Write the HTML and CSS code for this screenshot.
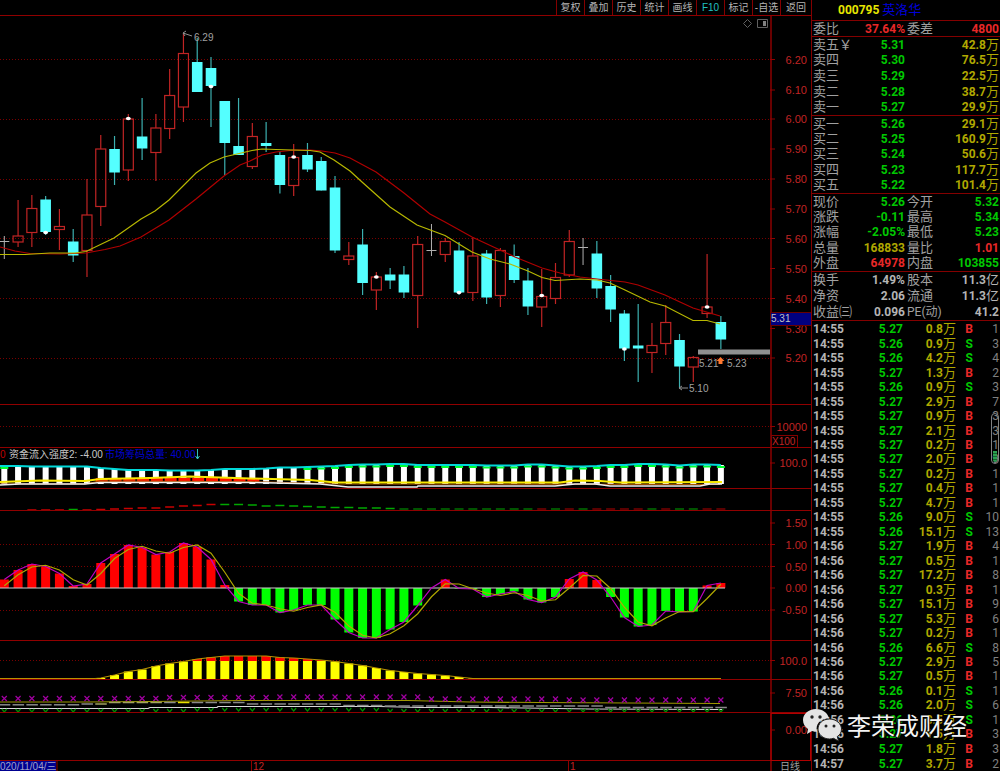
FILE: index.html
```html
<!DOCTYPE html>
<html lang="zh-CN">
<head>
<meta charset="utf-8">
<title>000795 英洛华</title>
<link rel="stylesheet" href="styles.css">
</head>
<body>
<div class="terminal">
  <main class="charts">
    <nav class="toolbar" aria-label="工具栏">
      <button type="button">复权</button>
      <button type="button">叠加</button>
      <button type="button">历史</button>
      <button type="button">统计</button>
      <button type="button">画线</button>
      <button type="button" class="f10">F10</button>
      <button type="button">标记</button>
      <button type="button">-自选</button>
      <button type="button">返回</button>
    </nav>
    <div class="panes" id="panes"></div>
  </main>
  <aside class="side">
    <h1 class="stock"><span class="code">000795</span> <span class="name">英洛华</span></h1>
    <table class="quote">
      <tbody><tr><th>委比</th><td class="up">37.64%</td><th>委差</th><td class="up">4800</td></tr></tbody>
    </table>
    <table class="quote book" id="sell"></table>
    <table class="quote book" id="buy"></table>
    <table class="quote five">
      <tbody>
      <tr><th>现价</th><td class="down">5.26</td><th>今开</th><td class="down">5.32</td></tr>
      <tr><th>涨跌</th><td class="down">-0.11</td><th>最高</th><td class="down">5.34</td></tr>
      <tr><th>涨幅</th><td class="down">-2.05%</td><th>最低</th><td class="down">5.23</td></tr>
      <tr><th>总量</th><td class="vol">168833</td><th>量比</th><td class="up">1.01</td></tr>
      <tr><th>外盘</th><td class="up">64978</td><th>内盘</th><td class="down">103855</td></tr>
      </tbody>
    </table>
    <table class="quote three">
      <tbody>
      <tr><th>换手</th><td>1.49%</td><th>股本</th><td>11.3<i>亿</i></td></tr>
      <tr><th>净资</th><td>2.06</td><th>流通</th><td>11.3<i>亿</i></td></tr>
      <tr><th>收益㈢</th><td>0.096</td><th class="pe">PE(动)</th><td>41.2</td></tr>
      </tbody>
    </table>
    <div class="tick-wrap">
      <table class="ticks" id="ticks"></table>
      <div class="gauge"><span></span></div>
    </div>
  </aside>
  <div class="watermark">
    <svg width="40" height="34" viewBox="0 0 40 34" aria-hidden="true">
      <path fill="#e4e4e4" d="M14 1C6.500 1 1 6 1 12c0 4 2 7 5 9l-1 5 5-3c2 .6 3.500.8 5 .7C13 16 19 10 27 10.500 26 5 20.500 1 14 1z"/>
      <path fill="#e4e4e4" stroke="#222" stroke-width="1" d="M27.500 11C20.500 11 16 15.800 16 21s5 10 11.500 10c1.500 0 2.800-.3 4-.7l5 2.700-1.200-4.500C38 27 39.500 24.300 39.500 21c0-5.300-5.500-10-12-10z"/>
      <g fill="#222"><circle cx="10" cy="9" r="1.700"/><circle cx="18" cy="9" r="1.700"/><circle cx="24" cy="18" r="1.500"/><circle cx="32" cy="18" r="1.500"/></g>
    </svg>
    <span>李荣成财经</span>
  </div>
</div>
<script src="app.js"></script>
</body>
</html>
```
FILE: styles.css
```css
* { box-sizing: border-box; }
body {
  margin: 0;
  background: #000;
  color: #b4b4b4;
  font-family: Roboto, "Liberation Sans", "Noto Sans CJK SC", sans-serif;
  font-size: 12px;
}
.terminal {
  position: relative;
  display: grid;
  grid-template-columns: minmax(0, 1fr) 189px;
  align-items: stretch;
}
.charts { display: flex; flex-direction: column; }

.toolbar {
  display: flex;
  justify-content: flex-end;
  height: 16px;
  border-bottom: 1px solid #900000;
}
.toolbar button {
  width: 28px;
  padding: 0;
  border: 0;
  border-left: 1px solid #840000;
  background: none;
  color: #b4b4b4;
  font: 10px/14px "Liberation Sans", "Noto Sans CJK SC", sans-serif;
  white-space: nowrap;
}
.toolbar button:last-child { width: 31px; }
.toolbar .f10 { color: #20c0c0; }

.panes { display: flex; flex-direction: column; }
.pane {
  display: block;
  width: 100%;
  height: auto;
  overflow: hidden;
  font-family: "Liberation Sans", "Noto Sans CJK SC", sans-serif;
  font-size: 11px;
}
.pane polyline { fill: none; }
.border { stroke: #900000; }
.grid { stroke: #780000; stroke-dasharray: 1 2; }
.axis { stroke: #680000; stroke-width: 2; }
.axis-label { fill: #c02424; text-anchor: end; }
.note { fill: #a0a0a0; font-size: 10px; }
.legend { font-size: 10px; }
.time { fill: #c02424; font-size: 10px; }

.side {
  display: flex;
  flex-direction: column;
  min-width: 0;
  border-left: 1px solid #840000;
}
.stock {
  height: 21px;
  margin: 0;
  padding-left: 26px;
  border-bottom: 1px solid #840000;
  font-size: 12px;
  line-height: 20px;
  white-space: nowrap;
}
.code { color: #e6e600; }
.name { color: #0000d8; font-size: 13px; font-weight: 400; }

table { width: 100%; border-collapse: collapse; table-layout: fixed; }
th, td { padding: 0; line-height: 14px; white-space: nowrap; }
th { text-align: left; font-size: 13px; font-weight: 400; color: #a0a0a0; }
td { text-align: right; font-weight: 700; }
td i { font-size: 13px; font-style: normal; font-weight: 400; }
.quote { border-bottom: 1px solid #840000; height: 16px; }
.quote th:first-child { width: 40px; padding-left: 1px; }
.quote td:nth-child(2) { width: 53px; }
.quote th:nth-child(3) { width: 42px; padding-left: 2px; }
.quote td:last-child { padding-right: 1px; }
.quote .pe { font-size: 12px; }
.book, .five { height: 78px; }
#sell { height: 79px; }
.three { height: 49px; }
.up { color: #e82828; }
.down { color: #00c800; }
.vol { color: #b0a800; }

.tick-wrap { position: relative; padding-top: 1px; }
.ticks { height: 449px; }
.ticks td:nth-child(1) { width: 40px; padding-left: 1px; text-align: left; }
.ticks td:nth-child(2) { width: 51px; }
.ticks td:nth-child(3) { width: 53px; }
.ticks td:nth-child(4) { width: 17px; }
.ticks td:nth-child(5) { padding-right: 1px; color: #808080; font-weight: 400; }
.gauge {
  position: absolute;
  right: 1px;
  top: 92px;
  display: flex;
  align-items: flex-end;
  width: 8px;
  height: 51px;
  padding: 1px;
  border: 1px solid #808080;
  border-radius: 4px;
}
.gauge span {
  width: 100%;
  height: 11px;
  border-radius: 0 0 2px 2px;
  background: repeating-linear-gradient(#2ca050 0 2px, #186030 2px 3px);
}

.watermark {
  position: absolute;
  right: 33px;
  bottom: 28px;
  display: flex;
  align-items: center;
  gap: 5px;
  color: #f4f4f4;
  font: 24px/36px "Noto Sans CJK SC", sans-serif;
  text-shadow: 1px 1px 1px #000, -1px -1px 1px #000;
}
```
FILE: app.js
```js
const STEP = 13.78;
const X = i => 4.3 + STEP * i;
const line = (x1, y1, x2, y2, attrs) => `<line x1="${x1}" y1="${y1}" x2="${x2}" y2="${y2}" ${attrs}/>`;
const rect = (x, y, w, h, attrs) => `<rect x="${x}" y="${y}" width="${w}" height="${h}" ${attrs}/>`;
const text = (x, y, s, attrs) => `<text x="${x}" y="${y}" ${attrs}>${s}</text>`;
const poly = (pts, color, w = 1.2) => `<polyline points="${pts}" stroke="${color}" stroke-width="${w}"/>`;
const grid = y => line(0, Math.floor(y) + 0.5, 770, Math.floor(y) + 0.5, 'class="grid"');
const label = (y, s) => line(770, y, 775, y, 'class="border"') + text(807, y + 4, s, 'class="axis-label"');
const box = document.getElementById('panes');

/* Panes share one coordinate space; each shows the band from top to bottom. */
function pane(top, bottom, name, body) {
  box.insertAdjacentHTML('beforeend',
    `<svg class="pane" viewBox="0 ${top} 811 ${bottom - top}" role="img" aria-label="${name}">` +
    line(771, top, 771, bottom, 'class="axis"') + body + '</svg>');
}
const bottomLine = y => line(0, y - 0.5, 811, y - 0.5, 'class="border"');

/* Candles: kind, high, body top, body bottom, low, marker */
const candles = [
['w',236,241.5,241.5,259],['r',200,236,242,247],['r',195,208.5,232.5,247],['c',196,199.5,232,235,232.5],
['r',209,226.5,229.5,250],['c',229,241.5,255.5,262],['r',179,215,250.5,277],['r',135,149,206.5,226],
['c',136,149,172.5,185],['r',114,119,170,181,118.5],['c',98,136.5,148.5,160],['r',114,128,152.5,181],
['r',69,95.5,128.5,139],['r',34,53.5,107,122],['c',38,62,92,92],['c',57,68,86,127,86.5],
['c',101,101,143,175],['c',98,146,155,155],['r',123,136.5,166.5,169],['c',122,143,146,152],
['c',152,155,185,193.5],['r',144,157.5,185.5,196,157],['c',143,155,169.5,172],['c',157,161,190.5,190.5],
['c',176,187.5,250.5,253],['r',242,256,259.5,265],['c',229,244.5,283,295],['r',272,277,290,310,277],
['c',268,274.5,280.5,289],['c',266,274.5,292.5,298],['r',236,244.5,295.5,328],['w',224,250.5,250.5,256],
['r',238,241.5,254.5,262],['c',242,250.5,292.5,295,292.5],['r',237,256,292.5,301],['c',250,253.5,297.5,304],
['r',248,250.5,295.5,307],['c',244.5,256,280,283],['c',268,280.5,306.5,315],['r',269,296.5,307,327,295.5],
['r',263,277.5,298.5,304],['r',230,241.5,275,277],['w',238,247.5,247.5,265],['c',241,253.5,288.5,298],
['c',275,286,309.5,322],['c',310,313.5,348.5,361,349],['c',304,345.5,348.5,382],['r',323,345.5,352.5,373],
['r',305,322.5,343.5,355],['c',334,340,366.5,388],['r',356,357.5,367,382],['r',254,307,313.5,318,307],
['c',316,322,339.5,349]];

let s = [59.5,119,179,238.5,298.5,358].map(grid).join('');
[[59.5,'6.20'],[90,'6.10'],[119,'6.00'],[149,'5.90'],[179,'5.80'],[209,'5.70'],[238.5,'5.60'],[268.5,'5.50'],[298.5,'5.40'],[328.5,'5.30'],[358,'5.20']]
  .forEach(([y, t]) => { s += label(y, t); });
s += rect(698, 349.5, 72, 5, 'fill="#909090"');
candles.forEach(([k, h, t, b, l], i) => {
  const x = X(i);
  if (k === 'c') s += line(x, h, x, l, 'stroke="#3cb0b0" stroke-width="1.200"') + rect(x - 5.3, t, 10.6, b - t, 'fill="#54ffff"');
  else if (k === 'r') s += line(x, h, x, t, 'stroke="#c02424" stroke-width="1.200"') + line(x, b, x, l, 'stroke="#c02424" stroke-width="1.200"') + rect(x - 5, t, 10, b - t, 'fill="none" stroke="#c02424" stroke-width="1.200"');
  else s += line(x, h, x, l, 'stroke="#b0b0b0"') + line(x - 5, t, x + 5, t, 'stroke="#b0b0b0"');
});
s += poly('0,247 15,251 30,253.5 60,254 86,253 105,249.5 120,246 141,237 169,220 196,199 224,176 240,165 250,161 262,155 276,152 295,150 310,150 322,151 335,153 350,158 376,172 404,193 430,214 445,222 472,237 500,250 515,257 542,268 560,273 580,277 597,279 625,282 638,285 665,295 680,302 693,308 720,316', '#b00000');
s += poly('0,254.5 25,254.5 50,253 75,253 86,251.5 114,238 141,219 155,211 169,200 196,173 210,163 224,157 252,150.5 262,149 276,149.5 310,150.5 320,152 334,160 350,171 362,182 390,207 417,225 445,235.5 472,252 490,259 510,264 528,271 542,277.5 555,280.5 580,279 597,280 610,283 625,290 650,302 665,306 693,320.5 707,320.5 720,324', '#b8b800');
candles.forEach((c, i) => { if (c[5]) s += `<ellipse cx="${X(i)}" cy="${c[5]}" rx="2.4" ry="1.8" fill="#fff"/>`; });
s += '<path d="M192 36l-9-3m3-2l-3 2 2 3" fill="none" stroke="#909090"/>' + text(194, 41, '6.29', 'class="note"');
s += '<path d="M688 388h-9m3-2l-3 2 3 2" fill="none" stroke="#909090"/>' + text(689, 392, '5.10', 'class="note"');
s += text(699, 367, '5.21', 'class="note"') + text(727, 367, '5.23', 'class="note"');
s += '<path d="M720.500 357l4 4h-2v3h-4v-3h-2z" fill="#ff7830"/>';
s += '<path d="M747.500 19.500l4 4-4 4-4-4z" fill="none" stroke="#606060"/><path d="M757.500 19.500h10v8h-10z" fill="none" stroke="#606060"/><path d="M763 21h3v5h-3z" fill="#808080"/>';
s += rect(770.5, 312.5, 41, 13, 'fill="#000080" stroke="#680000"') + text(771, 322, '5.31', 'fill="#c0c0c0" font-size="10"');
pane(16, 405, 'K线', s + bottomLine(405));

pane(405, 448, '成交量', grid(426.5) + label(426.5, '10000') + rect(771.5, 435.5, 26, 12, 'fill="none" stroke="#840000"') + text(772, 445, 'X100', 'fill="#c02424" font-size="10"') + bottomLine(448));

s = '';
const red = i => i >= 7 && i <= 18;
const top3 = [466,466,466.5,466.5,466.5,466.5,466.5,468,469,470,470,470,470.5,470.5,470.5,470,469,469,469,468.5,467.5,467.5,467,466.5,466,465,464.5,464.5,464,464,465,465,465,465,465,465.5,465.5,465.5,464.5,464.5,465.5,466.5,466.5,466,465,465,464,464,464.5,465.5,464.5,464.5,465];
top3.forEach((t, i) => {
  s += rect(X(i) - 3, t, 6, 484 - t, 'fill="#fff"');
  if (i >= 22 || i === 0) s += rect(X(i) - 4, t + 1, 8, 2, 'fill="#00ff30"');
  if (red(i)) s += rect(X(i) - 5, 478, 12, 4, 'fill="#ff1800"');
});
s += poly(top3.map((t, i) => X(i) + ',' + t).join(' '), '#00d8d8', 2) + line(0, 466, 5, 466, 'stroke="#00d8d8" stroke-width="2"');
s += poly('0,484 85,484 100,481 270,482 335,484 720,484.500', '#a85000');
s += poly('0,485 20,484 85,484 100,482.500 250,482.500 320,484 348,487 417,487 418,486 555,486 575,484 595,484 610,486 700,486 710,484 722,484', '#f0f0f0', 1.5);
s += poly('0,482 40,480.500 85,481 100,479 150,478 190,476.500 250,478.500 310,480 335,482.500 560,482.500 575,480.500 600,481 620,482.500 722,482', '#f8e800', 2);
s += text(0, 458, '0', 'class="legend" fill="#c00000"') + text(9, 458, '资金流入强度2: -4.00', 'class="legend" fill="#c8c8c8"') + text(105, 458, '市场筹码总量: 40.00', 'class="legend" fill="#0000d0"');
s += '<path d="M197.500 449v10m-2-3l2 3 2-3" fill="none" stroke="#30c0c0"/>' + label(463, '100.0');
pane(448, 489, '资金流入强度', s + bottomLine(489));

s = '';
const drift = [510,510,510,509.5,510,509.5,509,508.5,508,508,507,506,505.5,504.5,504.5,504.5,505,506,505.5,506,506.5,507,507.5,507.5,508,508,508.5];
const dim = new Set([39,41,43,44,45,46,48,51,52]);
for (let i = 2; i <= 52; i++) {
  const y = drift[i - 2] || 509;
  const r = (i < 16 && i !== 5) || dim.has(i);
  const color = r ? (i > 38 ? '#780000' : '#c80000') : (i > 28 ? '#007000' : '#00a800');
  s += line(X(i) - 4.5, y, X(i) + 4.5, y, `stroke="${color}" stroke-width="1.500"`);
}
pane(489, 511, '趋势', s + bottomLine(511));

s = [544.5,566.5,610].map(grid).join('');
[[523,'1.50'],[544.5,'1.00'],[566.5,'0.50'],[588,'0.00'],[610,'-0.50']].forEach(([y, t]) => { s += label(y, t); });
const macd = [579.5,570,564,566.5,573.5,586,584,563,554,545,547.5,554.5,552,543,547,559.5,585,601.5,605,605,612.5,610,605,605,619.5,632.5,638,638,629.5,622,605.5,588,579.5,588.5,589,597,594,591.5,599.5,602.5,597,579,572,580,597,617.5,626.5,625,611,612,611.5,585.5,583];
macd.forEach((y, i) => {
  s += y < 588 ? rect(X(i) - 4.5, y, 9, 588 - y, 'fill="#f00"') : rect(X(i) - 4.5, 588, 9, y - 588, 'fill="#0f0"');
});
s += line(0, 588, 725, 588, 'stroke="#d0d0d0"');
s += poly(macd.map((y, i) => X(i) + ',' + y).join(' '), '#c000c0');
s += poly(macd.map((y, i) => X(i) + ',' + (y + (i ? macd[i - 1] : 592)) / 2).join(' '), '#b0a800');
pane(511, 641, 'MACD', s + bottomLine(641));

s = grid(660.5) + label(660.5, '100.0');
const hill = [678,675,671.5,669.5,666,663.5,661.5,659,657.5,656,656,656,656,657.5,658,659,660,661.5,663.5,665.5,668,670.5,672,673.5,674.5,675.5,677,678.5];
s += bottomLine(680);
hill.forEach((y, n) => {
  const x = X(n + 7) - 4.5;
  s += rect(x, y, 9, 679 - y, 'fill="#ff0"');
  if (y < 661) s += rect(x, y, 9, 661 - y, 'fill="#f00"');
});
s += poly('0,678.500 95,678.500 ' + hill.map((y, n) => X(n + 7) + ',' + y).join(' ') + ' 721,678.500', '#b89400');
pane(641, 680, '能量', s);

s = label(693, '7.50');
s += poly('0,702 86,702 150,701.500 245,700.500 408,700.500 470,702 540,702.500 630,703 720,703.500', '#a09800');
s += poly('0,708.500 148,708.500 150,707.500 217,707.500 218,706.500 380,706.500 420,707.500 490,707.500 590,709 722,709.500', '#d8d8d8');
for (let i = 0; i <= 52; i++) {
  const x = X(i);
  const yx = i < 12 ? 698.5 : i < 20 ? 697.5 : i < 31 ? 697 : i < 41 ? 699 : 700;
  const yd = i < 6 ? 704.8 : i < 8 ? 704 : i < 18 ? 702.5 : i < 25 ? 704 : i < 28 ? 705.5 : i < 44 ? 706 : 707.5;
  const yv = i < 14 ? 711 : i < 28 ? 710 : 711;
  s += `<path d="M${x - 2.5} ${yx - 2.5}l5 5m0-5l-5 5" stroke="#a000a0" stroke-width="1.200"/>`;
  s += line(x - 5.5, yd, x + 6, yd, `stroke="${i === 13 ? '#e8e000' : i > 6 && i < 12 ? '#a0a060' : '#888'}" stroke-width="1.500"`);
  s += `<path d="M${x - 2.5} ${yv - 2}l2.500 3 2.500-3" fill="none" stroke="#009000" stroke-width="1.200"/>`;
}
pane(680, 713, '通道', s + bottomLine(713));

pane(713, 761, '空白', line(0, 760.5, 811, 760.5, 'class="border"') + rect(771, 713.5, 39.5, 47, 'fill="none" stroke="#b00000"') + label(730, '0.00'));

s = rect(0, 761, 56, 10, 'fill="#000090"') + text(0, 770, '020/11/04/三', 'fill="#a0a0c8" font-size="10"');
s += line(57, 761, 57, 771, 'class="border"') + line(251.5, 761, 251.5, 771, 'class="border"') + line(568.5, 761, 568.5, 771, 'class="border"');
s += text(253, 770, '12', 'class="time"') + text(570, 770, '1', 'class="time"') + text(780, 770, '日线', 'fill="#a0a0a0" font-size="10"');
pane(761, 771, '时间轴', s);

/* Order book and tick list */
const book = (id, rows) => {
  document.getElementById(id).innerHTML = '<tbody>' + rows.map(([n, p, v]) =>
    `<tr><th>${n}</th><td class="down">${p}</td><th></th><td class="vol">${v}<i>万</i></td></tr>`).join('') + '</tbody>';
};
book('sell', [['卖五￥','5.31','42.8'],['卖四','5.30','76.5'],['卖三','5.29','22.5'],['卖二','5.28','38.7'],['卖一','5.27','29.9']]);
book('buy', [['买一','5.26','29.1'],['买二','5.25','160.9'],['买三','5.24','50.6'],['买四','5.23','117.7'],['买五','5.22','101.4']]);

const ticks = `7 0.8 B 1|6 0.9 S 3|6 4.2 S 4|7 1.3 B 2|6 0.9 S 3|7 2.9 B 7|7 0.9 B 3|7 2.1 B 3|7 0.2 B 1|7 2.0 B 9|7 0.2 B 1|7 0.4 B 1|7 4.7 B 1|6 9.0 S 10|6 15.1 S 13|7 1.9 B 4|7 0.5 B 1|7 17.2 B 8|7 0.3 B 1|7 15.1 B 9|7 5.3 B 6|7 0.2 B 1|6 6.6 S 8|7 2.9 B 5|7 0.5 B 1|6 0.1 S 1|6 2.0 S 6|6 0.5 S 1|7 1.5 B 3|7 1.8 B 3|7 3.7 B 2`.split('|');
document.getElementById('ticks').innerHTML = '<tbody>' + ticks.map((row, i) => {
  const [p, v, side, n] = row.split(' ');
  const time = i < 15 ? '14:55' : i < 30 ? '14:56' : '14:57';
  return `<tr><td>${time}</td><td class="down">5.2${p}</td><td class="vol">${v}<i>万</i></td><td class="${side === 'B' ? 'up' : 'down'}">${side}</td><td>${n}</td></tr>`;
}).join('') + '</tbody>';
```
